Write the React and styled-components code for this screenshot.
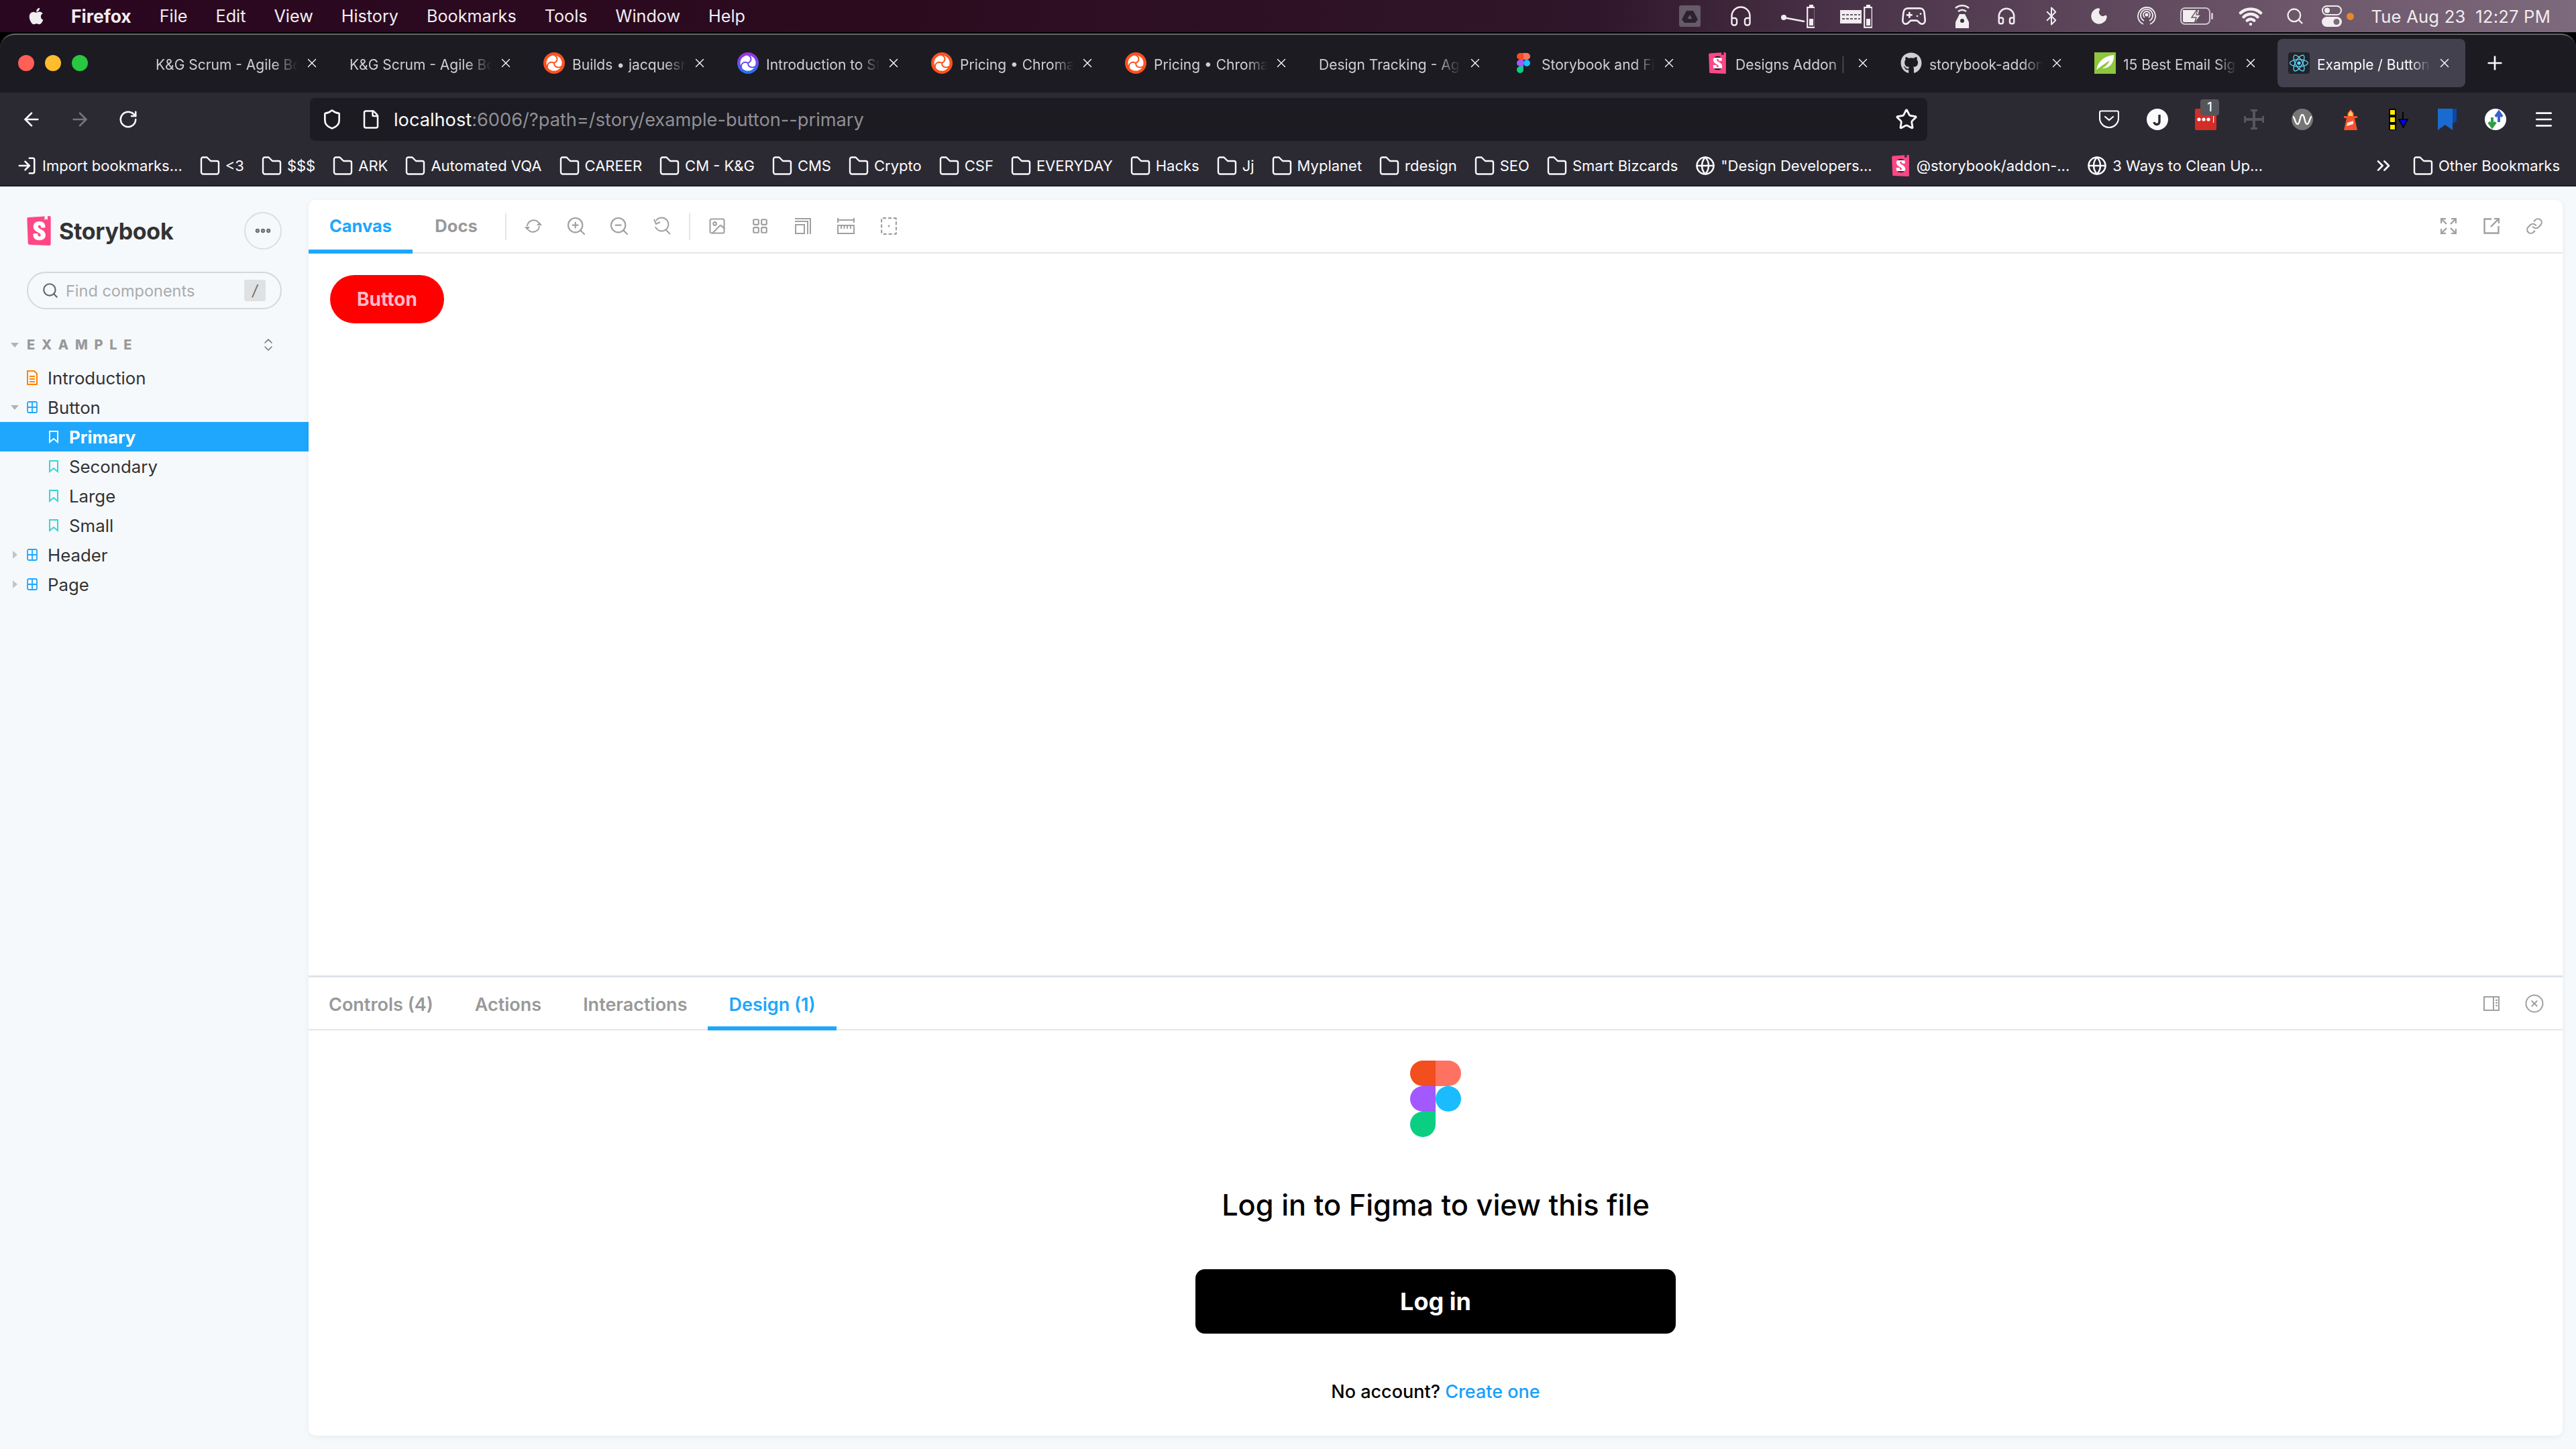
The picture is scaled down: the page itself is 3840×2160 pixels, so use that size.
import React from 'react';
import styled, { createGlobalStyle } from 'styled-components';
import {
  ArrowLeft, ArrowRight, Bluetooth, ChevronsRight, ChevronsUpDown, CircleX, Ellipsis, File, Gamepad2,
  Globe, Headphones, Image as ImageIcon, LayoutGrid, Link as LinkIcon, LogIn, Menu, Moon, Plus, RotateCw, Search,
  Shield, Star, Wifi, X, ZoomIn, ZoomOut,
} from 'lucide-react';
import { FaApple, FaGithub } from 'react-icons/fa';
import { SiReact, SiStorybook } from 'react-icons/si';

const blue = '#1ea7fd';
const sidebarBg = '#f6f9fc';
const mutedText = '#999999';
const chromeDark = '#1c1b22';
const chromeLight = '#2b2a33';
const iconGrey = '#a0a0a0';

const GlobalStyle = createGlobalStyle`
  html, body { margin: 0; padding: 0; background: #000; }
  body { font-family: Inter, "Noto Sans", sans-serif; }
  * { box-sizing: border-box; }
  svg { display: block; flex-shrink: 0; }
`;

const Screen = styled.div`
  width: 3840px;
  height: 2160px;
  display: flex;
  flex-direction: column;
  overflow: hidden;
  background: #000;
`;

/* macOS menu bar */
const MenuBar = styled.header`
  height: 48px;
  display: flex;
  align-items: center;
  padding: 0 38px 0 40px;
  color: #f1edf0;
  background: linear-gradient(90deg, #2a0720 0%, #2c0b1f 35%, #30162a 62%, #4a3449 72%, #6b5468 88%, #7d6a7c 100%);
`;

const MenuItem = styled.span`
  font-size: ${(p) => (p.$bold ? 26.5 : 25.2)}px;
  font-weight: ${(p) => (p.$bold ? 700 : 400)};
  margin-right: 42px;
`;

const AppleSlot = styled.span`
  width: 66px;
  display: flex;
`;

const StatusArea = styled.div`
  margin-left: auto;
  display: flex;
  align-items: center;
  color: #f1edf0;
`;

const StatusSlot = styled.span`
  display: flex;
  align-items: center;
  justify-content: center;
  width: ${(p) => p.$w}px;
  margin-right: ${(p) => p.$gap}px;
`;

const StatusDot = styled.span`
  width: 11px;
  height: 11px;
  margin: 0 25px 0 7px;
  border-radius: 50%;
  background: #e08a2c;
`;

const Clock = styled.span`
  font-size: 25.6px;
  letter-spacing: 0.2px;
  white-space: pre;
`;

/* Browser window */
const BrowserWindow = styled.div`
  flex: 1;
  display: flex;
  flex-direction: column;
  margin-top: 2px;
  border-top: 2px solid #66656b;
  border-radius: 22px 22px 0 0;
  overflow: hidden;
  background: ${chromeDark};
`;

const TabStrip = styled.div`
  height: 86px;
  display: flex;
  position: relative;
  padding: 6px 0 0 216px;
`;

const Traffic = styled.div`
  width: 118px;
  display: flex;
  gap: 16px;
  margin-left: -189px;
  margin-right: 71px;
  height: 72px;
  align-items: center;
`;

const Light = styled.span`
  width: 24px;
  height: 24px;
  border-radius: 50%;
  background: ${(p) => p.$color};
`;

const Tab = styled.div`
  width: 280px;
  height: 72px;
  margin-right: 9px;
  padding: 0 21px 0 16px;
  display: flex;
  align-items: center;
  gap: 11px;
  border-radius: 8px;
  color: ${(p) => (p.$active ? '#fbfbfe' : '#cfcfd3')};
  background: ${(p) => (p.$active ? '#42414d' : 'transparent')};
`;

const TabIcon = styled.span`
  width: 32px;
  height: 32px;
  display: flex;
  align-items: center;
  justify-content: center;
  flex-shrink: 0;
`;

const DarkFavicon = styled(TabIcon)`
  background: #20232a;
  border-radius: 4px;
  color: #61dafb;
`;

const TabTitle = styled.span`
  flex: 1;
  min-width: 0;
  padding-top: 4px;
  font-size: 21px;
  white-space: nowrap;
  overflow: hidden;
  -webkit-mask-image: linear-gradient(90deg, #000 82%, transparent 100%);
  mask-image: linear-gradient(90deg, #000 82%, transparent 100%);
`;

const TabClose = styled.span`
  width: 20px;
  display: flex;
  justify-content: center;
  color: #fbfbfe;
  flex-shrink: 0;
`;

const NewTab = styled.span`
  height: 72px;
  display: flex;
  align-items: center;
  margin-left: 19px;
  color: #fbfbfe;
`;

const NavBar = styled.div`
  height: 76px;
  padding: 8px 12px 4px 11px;
  display: flex;
  align-items: center;
  background: ${chromeLight};
`;

const NavButton = styled.span`
  width: 72px;
  display: flex;
  justify-content: center;
  color: ${(p) => (p.$dim ? '#77767c' : '#fbfbfe')};
`;

const UrlBar = styled.div`
  flex: 1;
  height: 64px;
  margin: 0 235px;
  padding: 0 14px 0 17px;
  display: flex;
  align-items: center;
  border-radius: 8px;
  background: ${chromeDark};
  color: #fbfbfe;
`;

const PageIcon = styled(File)`
  margin-left: 27px;
`;

const UrlText = styled.span`
  margin-left: 19px;
  font-size: 27.2px;
  color: #fbfbfe;
  & > span {
    color: #8f8f96;
  }
`;

const UrlStar = styled.span`
  margin-left: auto;
`;

const ExtSlot = styled.span`
  width: 72px;
  height: 40px;
  display: flex;
  align-items: center;
  justify-content: center;
  position: relative;
  color: #fbfbfe;
`;

const ExtBadge = styled.span`
  position: absolute;
  top: -10px;
  left: 28px;
  width: 28px;
  height: 24px;
  border-radius: 4px;
  background: #56565a;
  color: #fff;
  font-size: 18px;
  font-weight: 500;
  text-align: center;
  line-height: 24px;
`;

const BookmarksBar = styled.nav`
  height: 62px;
  padding: 4px 24px 0 25px;
  display: flex;
  align-items: center;
  gap: 26px;
  background: ${chromeLight};
`;

const Bookmark = styled.span`
  display: flex;
  align-items: center;
  gap: 8px;
  font-size: 22px;
  white-space: nowrap;
  color: #fbfbfe;
`;

const MoreBookmarks = styled.span`
  margin-left: auto;
  margin-right: 2px;
  color: #fbfbfe;
`;

/* Storybook */
const Storybook = styled.main`
  flex: 1;
  min-height: 0;
  display: flex;
  margin-top: 2px;
  background: ${sidebarBg};
`;

const Sidebar = styled.aside`
  width: 460px;
  flex-shrink: 0;
  padding-top: 38px;
`;

const BrandRow = styled.div`
  height: 56px;
  margin: 0 40px;
  display: flex;
  align-items: center;
`;

// square box so the mark keeps its shape, white sits behind the cut-out S
const BrandMark = styled.span`
  display: flex;
  flex-shrink: 0;
  width: ${(p) => p.$size}px;
  height: ${(p) => p.$size}px;
  padding: ${(p) => p.$size * 0.25}px;
  background: #fff content-box;
  color: #ff4785;
  & > svg {
    margin: -${(p) => p.$size * 0.25}px;
    width: ${(p) => p.$size}px;
    height: ${(p) => p.$size}px;
  }
`;

const SidebarMark = styled(BrandMark)`
  margin-left: -4px;
`;

const BrandName = styled.span`
  margin-left: 8px;
  font-size: 34px;
  font-weight: 700;
  color: #333;
  letter-spacing: -0.3px;
`;

const MenuCircle = styled.span`
  margin-left: auto;
  width: 56px;
  height: 56px;
  border-radius: 50%;
  border: 2px solid #dcdee0;
  display: flex;
  align-items: center;
  justify-content: center;
  color: #6f6f6f;
`;

const SearchBox = styled.div`
  height: 56px;
  margin: 33px 40px 0;
  padding: 0 22px 0 20px;
  display: flex;
  align-items: center;
  border: 2px solid #d5d7d9;
  border-radius: 28px;
  color: #666;
`;

const SearchHint = styled.span`
  margin-left: 10px;
  font-size: 23.5px;
  color: #a9abad;
`;

const KeyHint = styled.span`
  margin-left: auto;
  width: 32px;
  height: 32px;
  border-radius: 3px;
  background: #dfe1e3;
  color: #6b6b6b;
  font-size: 22px;
  font-style: italic;
  display: flex;
  align-items: center;
  justify-content: center;
`;

const SectionRow = styled.div`
  height: 44px;
  margin-top: 31px;
  margin-bottom: 5px;
  padding-right: 48px;
  display: flex;
  align-items: center;
  color: ${mutedText};
`;

const SectionTitle = styled.span`
  font-size: 20px;
  font-weight: 800;
  letter-spacing: 9.7px;
`;

const CaretSlot = styled.span`
  width: 40px;
  display: flex;
  justify-content: center;
  padding-left: 4px;
  flex-shrink: 0;
`;

const Caret = styled.span`
  width: 0;
  height: 0;
  border-style: solid;
  ${(p) =>
    p.$open
      ? `border-width: 7px 6px 0 6px; border-color: #b3b3b3 transparent transparent transparent;`
      : `border-width: 6px 0 6px 7px; border-color: transparent transparent transparent #c4c4c4;`}
`;

const ExpandIcon = styled.span`
  margin-left: auto;
  color: #777;
`;

const TreeRow = styled.div`
  height: 44px;
  display: flex;
  align-items: center;
  padding-left: ${(p) => (p.$child ? 73 : 0)}px;
  gap: ${(p) => (p.$child ? 16 : 0)}px;
  font-size: 25.8px;
  font-weight: ${(p) => (p.$selected ? 700 : 400)};
  color: ${(p) => (p.$selected ? '#fff' : '#333')};
  background: ${(p) => (p.$selected ? blue : 'transparent')};
`;

const TreeLabel = styled.span`
  margin-left: ${(p) => (p.$child ? 0 : 15)}px;
`;

const MainArea = styled.div`
  flex: 1;
  min-width: 0;
  padding: 20px 20px 20px 0;
  display: flex;
`;

const Panel = styled.section`
  flex: 1;
  min-width: 0;
  display: flex;
  flex-direction: column;
  border-radius: 10px;
  background: #fff;
  box-shadow: 0 2px 10px rgba(0, 0, 0, 0.06);
  overflow: hidden;
`;

const ToolBar = styled.div`
  height: 80px;
  flex-shrink: 0;
  display: flex;
  align-items: stretch;
  border-bottom: 2px solid #e6e6e6;
  padding-right: 10px;
`;

const TabButton = styled.span`
  width: ${(p) => p.$w}px;
  margin-bottom: -2px;
  display: flex;
  align-items: center;
  justify-content: center;
  font-size: 25.5px;
  font-weight: 700;
  color: ${(p) => (p.$active ? blue : mutedText)};
  border-bottom: 6px solid ${(p) => (p.$active ? blue : 'transparent')};
  padding-top: 3px;
`;

const Separator = styled.span`
  width: 2px;
  height: 40px;
  margin: 20px 8px 0;
  background: #e6e6e6;
`;

const ToolIcon = styled.span`
  width: 64px;
  display: flex;
  align-items: center;
  justify-content: center;
  color: ${iconGrey};
`;

const ToolSpacer = styled.span`
  flex: 1;
`;

const CanvasArea = styled.div`
  flex: 1;
  min-height: 0;
  padding: 32px;
`;

const DemoButton = styled.span`
  display: inline-flex;
  align-items: center;
  justify-content: center;
  width: 170px;
  height: 72px;
  border-radius: 36px;
  background: #ff0000;
  color: #ffb9c8;
  font-size: 28px;
  font-weight: 700;
`;

const AddonPanel = styled.div`
  height: 686px;
  flex-shrink: 0;
  display: flex;
  flex-direction: column;
  border-top: 3px solid #dfe4e9;
`;

const AddonBar = styled(ToolBar)`
  height: 79px;
`;

const AddonTab = styled(TabButton)`
  font-size: 27px;
  font-weight: 600;
  width: auto;
  padding: 8px 31px 0;
  ${(p) => p.$first && 'padding-left: 30px;'}
`;

const LoginPane = styled.div`
  flex: 1;
  display: flex;
  flex-direction: column;
  align-items: center;
  padding-top: 45px;
`;

const LoginTitle = styled.h2`
  margin: 71px 0 0;
  font-size: 43.3px;
  line-height: 60px;
  font-weight: 450;
  color: #000;
`;

const LoginButton = styled.span`
  margin-top: 66px;
  width: 716px;
  height: 96px;
  border-radius: 14px;
  background: #000;
  color: #fff;
  font-size: 36px;
  font-weight: 700;
  display: flex;
  align-items: center;
  justify-content: center;
`;

const LoginNote = styled.p`
  margin: 67px 0 0;
  font-size: 27px;
  line-height: 40px;
  font-weight: 500;
  color: #000;
  & > a {
    color: #18a0fb;
  }
`;

/* Drawn icons */
const FigmaLogo = ({ width, height }) => (
  <svg width={width} height={height} viewBox="0 0 38 57" preserveAspectRatio="none">
    <path fill="#F24E1E" d="M0 9.5A9.5 9.5 0 0 1 9.5 0H19v19H9.5A9.5 9.5 0 0 1 0 9.5z" />
    <path fill="#FF7262" d="M19 0h9.5a9.5 9.5 0 0 1 0 19H19V0z" />
    <path fill="#1ABCFE" d="M19 28.5a9.5 9.5 0 1 1 19 0 9.5 9.5 0 0 1-19 0z" />
    <path fill="#A259FF" d="M0 28.5A9.5 9.5 0 0 1 9.5 19H19v19H9.5A9.5 9.5 0 0 1 0 28.5z" />
    <path fill="#0ACF83" d="M0 47.5A9.5 9.5 0 0 1 9.5 38H19v9.5a9.5 9.5 0 0 1-19 0z" />
  </svg>
);

// white ball split by curved seams, in the tab's accent colour
const Chromatic = ({ grad }) => {
  const seam = grad ? '#6a4ae8' : '#fc521f';
  return (
    <svg width="32" height="32" viewBox="0 0 32 32">
      <defs>
        <linearGradient id="chromaticGrad" x1="0" y1="0" x2="0" y2="1">
          <stop offset="0" stopColor="#b02ae0" />
          <stop offset="1" stopColor="#1c78f2" />
        </linearGradient>
      </defs>
      <circle cx="16" cy="16" r="16" fill={grad ? 'url(#chromaticGrad)' : '#fc521f'} />
      <circle cx="16" cy="16" r="11.5" fill="#fff" />
      <g fill="none" stroke={seam} strokeWidth="2" strokeLinecap="round">
        <path d="M16 4c6 3 6 9 0 12" />
        <path d="M27 21c-5 3-11 1-11-5" />
        <path d="M6 23c-1-7 5-10 10-7" />
      </g>
    </svg>
  );
};

const StorybookFav = () => (
  <BrandMark $size={32}>
    <SiStorybook />
  </BrandMark>
);

const LeafFav = () => (
  <svg width="32" height="32" viewBox="0 0 32 32">
    <rect width="32" height="32" fill="#8dc63f" />
    <path d="M3 26C6 12 16 5 29 4c1 11-6 20-17 20 5-3 9-7 11-12-6 4-12 8-20 14z" fill="#fff" />
  </svg>
);

const ReactFav = () => (
  <DarkFavicon>
    <SiReact size={28} />
  </DarkFavicon>
);

const Folder = () => (
  <svg width="30" height="28" viewBox="0 0 30 28" fill="none" stroke="#fbfbfe" strokeWidth="2.4">
    <path d="M2 4a2.5 2.5 0 0 1 2.5-2.5h6L16 7h9.5A2.5 2.5 0 0 1 28 9.5v14a3 3 0 0 1-3 3H5a3 3 0 0 1-3-3z" strokeLinejoin="round" />
  </svg>
);

const BatteryStrip = () => (
  <svg width="14" height="36" viewBox="0 0 14 36">
    <rect x="1.2" y="5" width="11.6" height="29.8" fill="none" stroke="#f1edf0" strokeWidth="2.2" />
    <rect x="4" y="1" width="6" height="4" fill="#f1edf0" />
    <rect x="4" y="22" width="6" height="10" fill="#f1edf0" />
  </svg>
);

const DriveBox = () => (
  <svg width="32" height="32" viewBox="0 0 32 32">
    <rect width="32" height="32" rx="3" fill="#665b68" />
    <path d="M11 8h10l7 13-4 5H8l-4-5z" fill="#2f2031" />
    <path d="M16 14l3.4 6h-6.8z" fill="#665b68" />
  </svg>
);

const PipeIcon = () => (
  <svg width="50" height="36" viewBox="0 0 50 36">
    <path d="M3 20l32 6" stroke="#f1edf0" strokeWidth="2.4" />
    <circle cx="4" cy="20" r="4" fill="#f1edf0" />
    <g transform="translate(38 0)"><BatteryStrip /></g>
  </svg>
);

const KeyboardIcon = () => (
  <svg width="48" height="36" viewBox="0 0 48 36">
    <rect x="0" y="9" width="32" height="20" fill="#f1edf0" />
    <path d="M3 16h27M3 22h27" stroke="#3e2d40" strokeWidth="1.6" strokeDasharray="4 2" />
    <g transform="translate(35 0)"><BatteryStrip /></g>
  </svg>
);

const AntennaIcon = () => (
  <svg width="28" height="36" viewBox="0 0 28 36">
    <path d="M4 6c6-5 14-5 20 0M8 11c4-3 8-3 12 0" fill="none" stroke="#f1edf0" strokeWidth="2.4" />
    <path d="M10 15h8l6 12v9H4v-9z" fill="#f1edf0" />
    <circle cx="14" cy="25" r="3" fill="#3e2d40" />
  </svg>
);

const AirDropIcon = () => (
  <svg width="28" height="34" viewBox="0 0 28 34" fill="none" stroke="#f1edf0" strokeWidth="1.8">
    <path d="M9 29a13 13 0 1 1 10 0" />
    <path d="M10 24a9 9 0 1 1 8 0" />
    <path d="M11 19a5 5 0 1 1 6 0" />
    <circle cx="14" cy="15" r="1.6" fill="#f1edf0" />
  </svg>
);

const BatteryBolt = () => (
  <svg width="50" height="26" viewBox="0 0 50 26">
    <rect x="1" y="1" width="43" height="24" rx="6" fill="none" stroke="#c9c3c9" strokeWidth="2" />
    <path d="M4 4h24l-4 18H6a2 2 0 0 1-2-2z" fill="#f1edf0" />
    <rect x="46" y="8" width="3" height="10" rx="1.5" fill="#c9c3c9" />
    <path d="M26 2l-9 13h7l-3 9 10-13h-7z" fill="#f1edf0" stroke="#6b5468" strokeWidth="1.4" />
  </svg>
);

const ControlCenter = () => (
  <svg width="30" height="36" viewBox="0 0 30 36">
    <rect x="1" y="3" width="28" height="13" rx="6.5" fill="none" stroke="#f1edf0" strokeWidth="2" />
    <circle cx="8" cy="9.5" r="4" fill="#f1edf0" />
    <rect x="0" y="19" width="30" height="15" rx="7.5" fill="#f1edf0" />
    <circle cx="22" cy="26.5" r="4.5" fill="#7d6a7c" />
  </svg>
);

const PocketIcon = () => (
  <svg width="30" height="28" viewBox="0 0 30 28" fill="none" stroke="#fbfbfe" strokeWidth="2.2" strokeLinecap="round">
    <path d="M3 1.5h24a2 2 0 0 1 2 2V12a14 14 0 0 1-28 0V3.5a2 2 0 0 1 2-2z" />
    <path d="M9 10l6 5 6-5" />
  </svg>
);

const JIcon = () => (
  <svg width="32" height="32" viewBox="0 0 32 32">
    <circle cx="16" cy="16" r="16" fill="#fbfbfe" />
    <path d="M19 9v10a4 4 0 0 1-8 1" fill="none" stroke="#2b2a33" strokeWidth="3.4" />
  </svg>
);

const LastPassIcon = () => (
  <svg width="32" height="32" viewBox="0 0 32 32">
    <rect width="32" height="32" rx="2" fill="#d32d27" />
    <circle cx="6" cy="16" r="2.6" fill="#fff" />
    <circle cx="13" cy="16" r="2.6" fill="#fff" />
    <circle cx="20" cy="16" r="2.6" fill="#fff" />
    <rect x="27" y="11" width="1.2" height="10" fill="#fff" />
  </svg>
);

const CrossIcon = () => (
  <svg width="32" height="32" viewBox="0 0 32 32" fill="#56565c">
    <rect x="14" y="2" width="4" height="28" />
    <rect x="2" y="14" width="28" height="4" />
    <rect x="11" y="1" width="10" height="3" />
    <rect x="11" y="28" width="10" height="3" />
    <rect x="1" y="11" width="3" height="10" />
    <rect x="28" y="11" width="3" height="10" />
  </svg>
);

const WaveIcon = () => (
  <svg width="32" height="32" viewBox="0 0 32 32">
    <circle cx="16" cy="16" r="16" fill="#767676" />
    <path d="M2 12c3 0 3 11 7 11s3-14 7-14 3 14 7 14 4-11 7-11" fill="none" stroke="#fff" strokeWidth="2.4" />
  </svg>
);

const LighthouseIcon = () => (
  <svg width="22" height="32" viewBox="0 0 22 32">
    <path d="M7 7l4-5 4 5v5H7z" fill="#f4c95d" stroke="#f4512c" strokeWidth="1.2" />
    <rect x="1" y="11" width="20" height="3" fill="#f4512c" />
    <path d="M5 14h12l4 18H1z" fill="#f4512c" />
    <path d="M6 21l9-3v5l-10 3z" fill="#fbe6dd" />
  </svg>
);

const StackIcon = () => (
  <svg width="30" height="32" viewBox="0 0 30 32">
    {[0, 11, 22].map((y) => (
      <rect key={y} x="1" y={y + 1} width="9" height="9" fill="#ffea00" stroke="#000" strokeWidth="2" />
    ))}
    <path d="M21 5v11" stroke="#000" strokeWidth="2" />
    <path d="M15 16h13l-6.5 12z" fill="#0000f0" stroke="#000" strokeWidth="1.6" />
  </svg>
);

const BlueBookmark = () => (
  <svg width="28" height="32" viewBox="0 0 28 32">
    <path d="M0 0h22v32l-11-8-11 8z" fill="#1a6bd0" />
    <path d="M22 0h6v19l-6 3z" fill="#0d47a1" />
  </svg>
);

const UpDownIcon = () => (
  <svg width="32" height="32" viewBox="0 0 32 32">
    <circle cx="16" cy="16" r="16" fill="#fff" />
    <path d="M11 27V13M6 20l5 7 5-7" fill="none" stroke="#2f9e44" strokeWidth="4" />
    <path d="M21 5v15M16 12l5-7 5 7" fill="none" stroke="#3563c9" strokeWidth="4" />
  </svg>
);

const DocIcon = () => (
  <svg width="16" height="22" viewBox="0 0 16 22" fill="none" stroke="#ff8300" strokeWidth="2">
    <path d="M1 1h10l4 4v16H1z" />
    <path d="M4 9h8M4 13h8M4 17h8" />
  </svg>
);

const ComponentIcon = () => (
  <svg width="16" height="18" viewBox="0 0 16 18" fill="none" stroke={blue} strokeWidth="1.8">
    <rect x="1" y="1" width="14" height="16" rx="2" />
    <path d="M8 1v16M1 9h14" />
  </svg>
);

const StoryIcon = ({ selected }) => (
  <svg width="14" height="19" viewBox="0 0 14 19" fill="none" stroke={selected ? '#fff' : '#37d5d3'} strokeWidth="2">
    <path d="M1 1h12v16l-6-5-6 5z" />
  </svg>
);

const SyncIcon = () => (
  <svg width="28" height="28" viewBox="0 0 28 28" fill="none" stroke="currentColor" strokeWidth="2">
    <path d="M5 14a9.5 9.5 0 0 1 17-5" />
    <path d="M23 14a9.5 9.5 0 0 1-17 5" />
    <path d="M19 13h8l-4-5zM1 15h8l-4 5z" fill="currentColor" stroke="none" />
  </svg>
);

const ResetZoom = () => (
  <svg width="28" height="28" viewBox="0 0 28 28" fill="none" stroke="currentColor" strokeWidth="2">
    <path d="M5 6a10 10 0 1 1-1 9" />
    <path d="M2 4l3 7 6-3" />
    <path d="M19 19l7 7" />
  </svg>
);

const OutlineIcon = () => (
  <svg width="24" height="24" viewBox="0 0 24 24" fill="none" stroke="currentColor" strokeWidth="2">
    <path d="M0 1h24M0 5h19v19M23 1v23" />
    <rect x="1" y="10" width="13" height="13" />
  </svg>
);

const RulerIcon = () => (
  <svg width="26" height="24" viewBox="0 0 26 24" fill="none" stroke="currentColor" strokeWidth="2">
    <path d="M1 0v7M25 0v7M1 3h24" />
    <rect x="1" y="11" width="24" height="12" />
    <path d="M6 11v5M10.5 11v5M15 11v5M20 11v5" />
  </svg>
);

const CropIcon = () => (
  <svg width="24" height="26" viewBox="0 0 24 26" fill="none" stroke="currentColor" strokeWidth="2.4">
    <rect x="1" y="1" width="22" height="24" rx="2" strokeDasharray="5 3" />
    <circle cx="12" cy="13" r="1.4" fill="currentColor" stroke="none" />
  </svg>
);

const FullscreenIcon = () => (
  <svg width="24" height="24" viewBox="0 0 24 24" fill="none" stroke="currentColor" strokeWidth="2.4">
    <path d="M1 8V1h7M16 1h7v7M23 16v7h-7M8 23H1v-7" />
    <path d="M2 2l7 7M22 2l-7 7M22 22l-7-7M2 22l7-7" />
  </svg>
);

const OpenNewIcon = () => (
  <svg width="24" height="24" viewBox="0 0 24 24" fill="none" stroke="currentColor" strokeWidth="2.4">
    <path d="M12 1.5H1.5v21h21V12" />
    <path d="M11 13L23 1M16 1h7v7" />
  </svg>
);

const PanelIcon = () => (
  <svg width="24" height="22" viewBox="0 0 24 22" fill="none" stroke="currentColor" strokeWidth="2">
    <rect x="1" y="1" width="22" height="20" />
    <path d="M15 1v20M18 6h3M18 10h3M18 14h3" />
  </svg>
);

const tabs = [
  { title: 'K&G Scrum - Agile Board' },
  { title: 'K&G Scrum - Agile Board' },
  { title: 'Builds • jacquesrn', icon: <Chromatic /> },
  { title: 'Introduction to Storybook', icon: <Chromatic grad /> },
  { title: 'Pricing • Chromatic', icon: <Chromatic /> },
  { title: 'Pricing • Chromatic', icon: <Chromatic /> },
  { title: 'Design Tracking - Agile' },
  { title: 'Storybook and Figma', icon: <FigmaLogo width={20} height={30} /> },
  { title: 'Designs Addon | Storybook', icon: <StorybookFav /> },
  { title: 'storybook-addon-designs', icon: <FaGithub size={32} /> },
  { title: '15 Best Email Signature', icon: <LeafFav /> },
  { title: 'Example / Button', icon: <ReactFav />, active: true },
];

const bookmarks = [
  'Import bookmarks...', '<3', '$$$', 'ARK', 'Automated VQA', 'CAREER', 'CM - K&G', 'CMS', 'Crypto', 'CSF',
  'EVERYDAY', 'Hacks', 'Jj', 'Myplanet', 'rdesign', 'SEO', 'Smart Bizcards',
];

const stories = ['Primary', 'Secondary', 'Large', 'Small'];

const App = () => (
  <Screen>
    <GlobalStyle />
    <MenuBar>
      <AppleSlot>
        <FaApple size={28} />
      </AppleSlot>
      <MenuItem $bold>Firefox</MenuItem>
      {['File', 'Edit', 'View', 'History', 'Bookmarks', 'Tools', 'Window', 'Help'].map((m) => (
        <MenuItem key={m}>{m}</MenuItem>
      ))}
      <StatusArea>
        <StatusSlot $w={32} $gap={43}><DriveBox /></StatusSlot>
        <StatusSlot $w={33} $gap={44}><Headphones size={36} strokeWidth={1.6} /></StatusSlot>
        <StatusSlot $w={50} $gap={38}><PipeIcon /></StatusSlot>
        <StatusSlot $w={48} $gap={41}><KeyboardIcon /></StatusSlot>
        <StatusSlot $w={41} $gap={38}><Gamepad2 size={40} strokeWidth={1.6} /></StatusSlot>
        <StatusSlot $w={28} $gap={38}><AntennaIcon /></StatusSlot>
        <StatusSlot $w={27} $gap={43}><Headphones size={30} strokeWidth={2} /></StatusSlot>
        <StatusSlot $w={22} $gap={47}><Bluetooth size={30} strokeWidth={1.6} /></StatusSlot>
        <StatusSlot $w={25} $gap={45}><Moon size={28} fill="#f1edf0" /></StatusSlot>
        <StatusSlot $w={28} $gap={36}><AirDropIcon /></StatusSlot>
        <StatusSlot $w={50} $gap={36}><BatteryBolt /></StatusSlot>
        <StatusSlot $w={37} $gap={36}><Wifi size={36} strokeWidth={3} /></StatusSlot>
        <StatusSlot $w={24} $gap={28}><Search size={28} strokeWidth={2} /></StatusSlot>
        <StatusSlot $w={30} $gap={0}><ControlCenter /></StatusSlot>
        <StatusDot />
        <Clock>Tue Aug 23  12:27 PM</Clock>
      </StatusArea>
    </MenuBar>

    <BrowserWindow>
      <TabStrip>
        <Traffic>
          <Light $color="#ff5f57" />
          <Light $color="#febc2e" />
          <Light $color="#28c840" />
        </Traffic>
        {tabs.map((t, i) => (
          <Tab key={i} $active={t.active}>
            {t.icon && <TabIcon>{t.icon}</TabIcon>}
            <TabTitle>{t.title}</TabTitle>
            <TabClose><X size={22} strokeWidth={1.5} /></TabClose>
          </Tab>
        ))}
        <NewTab><Plus size={32} strokeWidth={2} /></NewTab>
      </TabStrip>

      <NavBar>
        <NavButton><ArrowLeft size={32} strokeWidth={2} /></NavButton>
        <NavButton $dim><ArrowRight size={32} strokeWidth={2} /></NavButton>
        <NavButton><RotateCw size={30} strokeWidth={2} /></NavButton>
        <UrlBar>
          <Shield size={32} strokeWidth={2} />
          <PageIcon size={30} strokeWidth={2} />
          <UrlText>localhost<span>:6006/?path=/story/example-button--primary</span></UrlText>
          <UrlStar><Star size={34} strokeWidth={2} /></UrlStar>
        </UrlBar>
        <ExtSlot><PocketIcon /></ExtSlot>
        <ExtSlot><JIcon /></ExtSlot>
        <ExtSlot><LastPassIcon /><ExtBadge>1</ExtBadge></ExtSlot>
        <ExtSlot><CrossIcon /></ExtSlot>
        <ExtSlot><WaveIcon /></ExtSlot>
        <ExtSlot><LighthouseIcon /></ExtSlot>
        <ExtSlot><StackIcon /></ExtSlot>
        <ExtSlot><BlueBookmark /></ExtSlot>
        <ExtSlot><UpDownIcon /></ExtSlot>
        <ExtSlot><Menu size={32} strokeWidth={2} /></ExtSlot>
      </NavBar>

      <BookmarksBar>
        {bookmarks.map((b, i) => (
          <Bookmark key={b}>
            {i === 0 ? <LogIn size={30} strokeWidth={2} /> : <Folder />}
            {b}
          </Bookmark>
        ))}
        <Bookmark><Globe size={30} strokeWidth={2} />"Design Developers...</Bookmark>
        <Bookmark><StorybookFav />@storybook/addon-...</Bookmark>
        <Bookmark><Globe size={30} strokeWidth={2} />3 Ways to Clean Up...</Bookmark>
        <MoreBookmarks><ChevronsRight size={32} strokeWidth={2} /></MoreBookmarks>
        <Bookmark><Folder />Other Bookmarks</Bookmark>
      </BookmarksBar>

      <Storybook>
        <Sidebar>
          <BrandRow>
            <SidebarMark $size={44}><SiStorybook /></SidebarMark>
            <BrandName>Storybook</BrandName>
            <MenuCircle><Ellipsis size={28} strokeWidth={3.4} /></MenuCircle>
          </BrandRow>
          <SearchBox>
            <Search size={26} strokeWidth={2} />
            <SearchHint>Find components</SearchHint>
            <KeyHint>/</KeyHint>
          </SearchBox>
          <SectionRow>
            <CaretSlot><Caret $open /></CaretSlot>
            <SectionTitle>EXAMPLE</SectionTitle>
            <ExpandIcon><ChevronsUpDown size={24} strokeWidth={1.6} /></ExpandIcon>
          </SectionRow>
          <TreeRow>
            <CaretSlot />
            <DocIcon />
            <TreeLabel>Introduction</TreeLabel>
          </TreeRow>
          <TreeRow>
            <CaretSlot><Caret $open /></CaretSlot>
            <ComponentIcon />
            <TreeLabel>Button</TreeLabel>
          </TreeRow>
          {stories.map((s) => (
            <TreeRow key={s} $child $selected={s === 'Primary'}>
              <StoryIcon selected={s === 'Primary'} />
              <TreeLabel $child>{s}</TreeLabel>
            </TreeRow>
          ))}
          {['Header', 'Page'].map((s) => (
            <TreeRow key={s}>
              <CaretSlot><Caret /></CaretSlot>
              <ComponentIcon />
              <TreeLabel>{s}</TreeLabel>
            </TreeRow>
          ))}
        </Sidebar>

        <MainArea>
          <Panel>
            <ToolBar>
              <TabButton $w={155} $active>Canvas</TabButton>
              <TabButton $w={130}>Docs</TabButton>
              <Separator />
              <ToolIcon><SyncIcon /></ToolIcon>
              <ToolIcon><ZoomIn size={32} strokeWidth={1.6} /></ToolIcon>
              <ToolIcon><ZoomOut size={32} strokeWidth={1.6} /></ToolIcon>
              <ToolIcon><ResetZoom /></ToolIcon>
              <Separator />
              <ToolIcon><ImageIcon size={28} strokeWidth={1.8} /></ToolIcon>
              <ToolIcon><LayoutGrid size={26} strokeWidth={2} /></ToolIcon>
              <ToolIcon><OutlineIcon /></ToolIcon>
              <ToolIcon><RulerIcon /></ToolIcon>
              <ToolIcon><CropIcon /></ToolIcon>
              <ToolSpacer />
              <ToolIcon><FullscreenIcon /></ToolIcon>
              <ToolIcon><OpenNewIcon /></ToolIcon>
              <ToolIcon><LinkIcon size={26} strokeWidth={2} /></ToolIcon>
            </ToolBar>
            <CanvasArea>
              <DemoButton>Button</DemoButton>
            </CanvasArea>
            <AddonPanel>
              <AddonBar>
                <AddonTab $first>Controls (4)</AddonTab>
                <AddonTab>Actions</AddonTab>
                <AddonTab>Interactions</AddonTab>
                <AddonTab $active>Design (1)</AddonTab>
                <ToolSpacer />
                <ToolIcon><PanelIcon /></ToolIcon>
                <ToolIcon><CircleX size={30} strokeWidth={1.6} /></ToolIcon>
              </AddonBar>
              <LoginPane>
                <FigmaLogo width={76} height={114} />
                <LoginTitle>Log in to Figma to view this file</LoginTitle>
                <LoginButton>Log in</LoginButton>
                <LoginNote>No account? <a>Create one</a></LoginNote>
              </LoginPane>
            </AddonPanel>
          </Panel>
        </MainArea>
      </Storybook>
    </BrowserWindow>
  </Screen>
);

export default App;
